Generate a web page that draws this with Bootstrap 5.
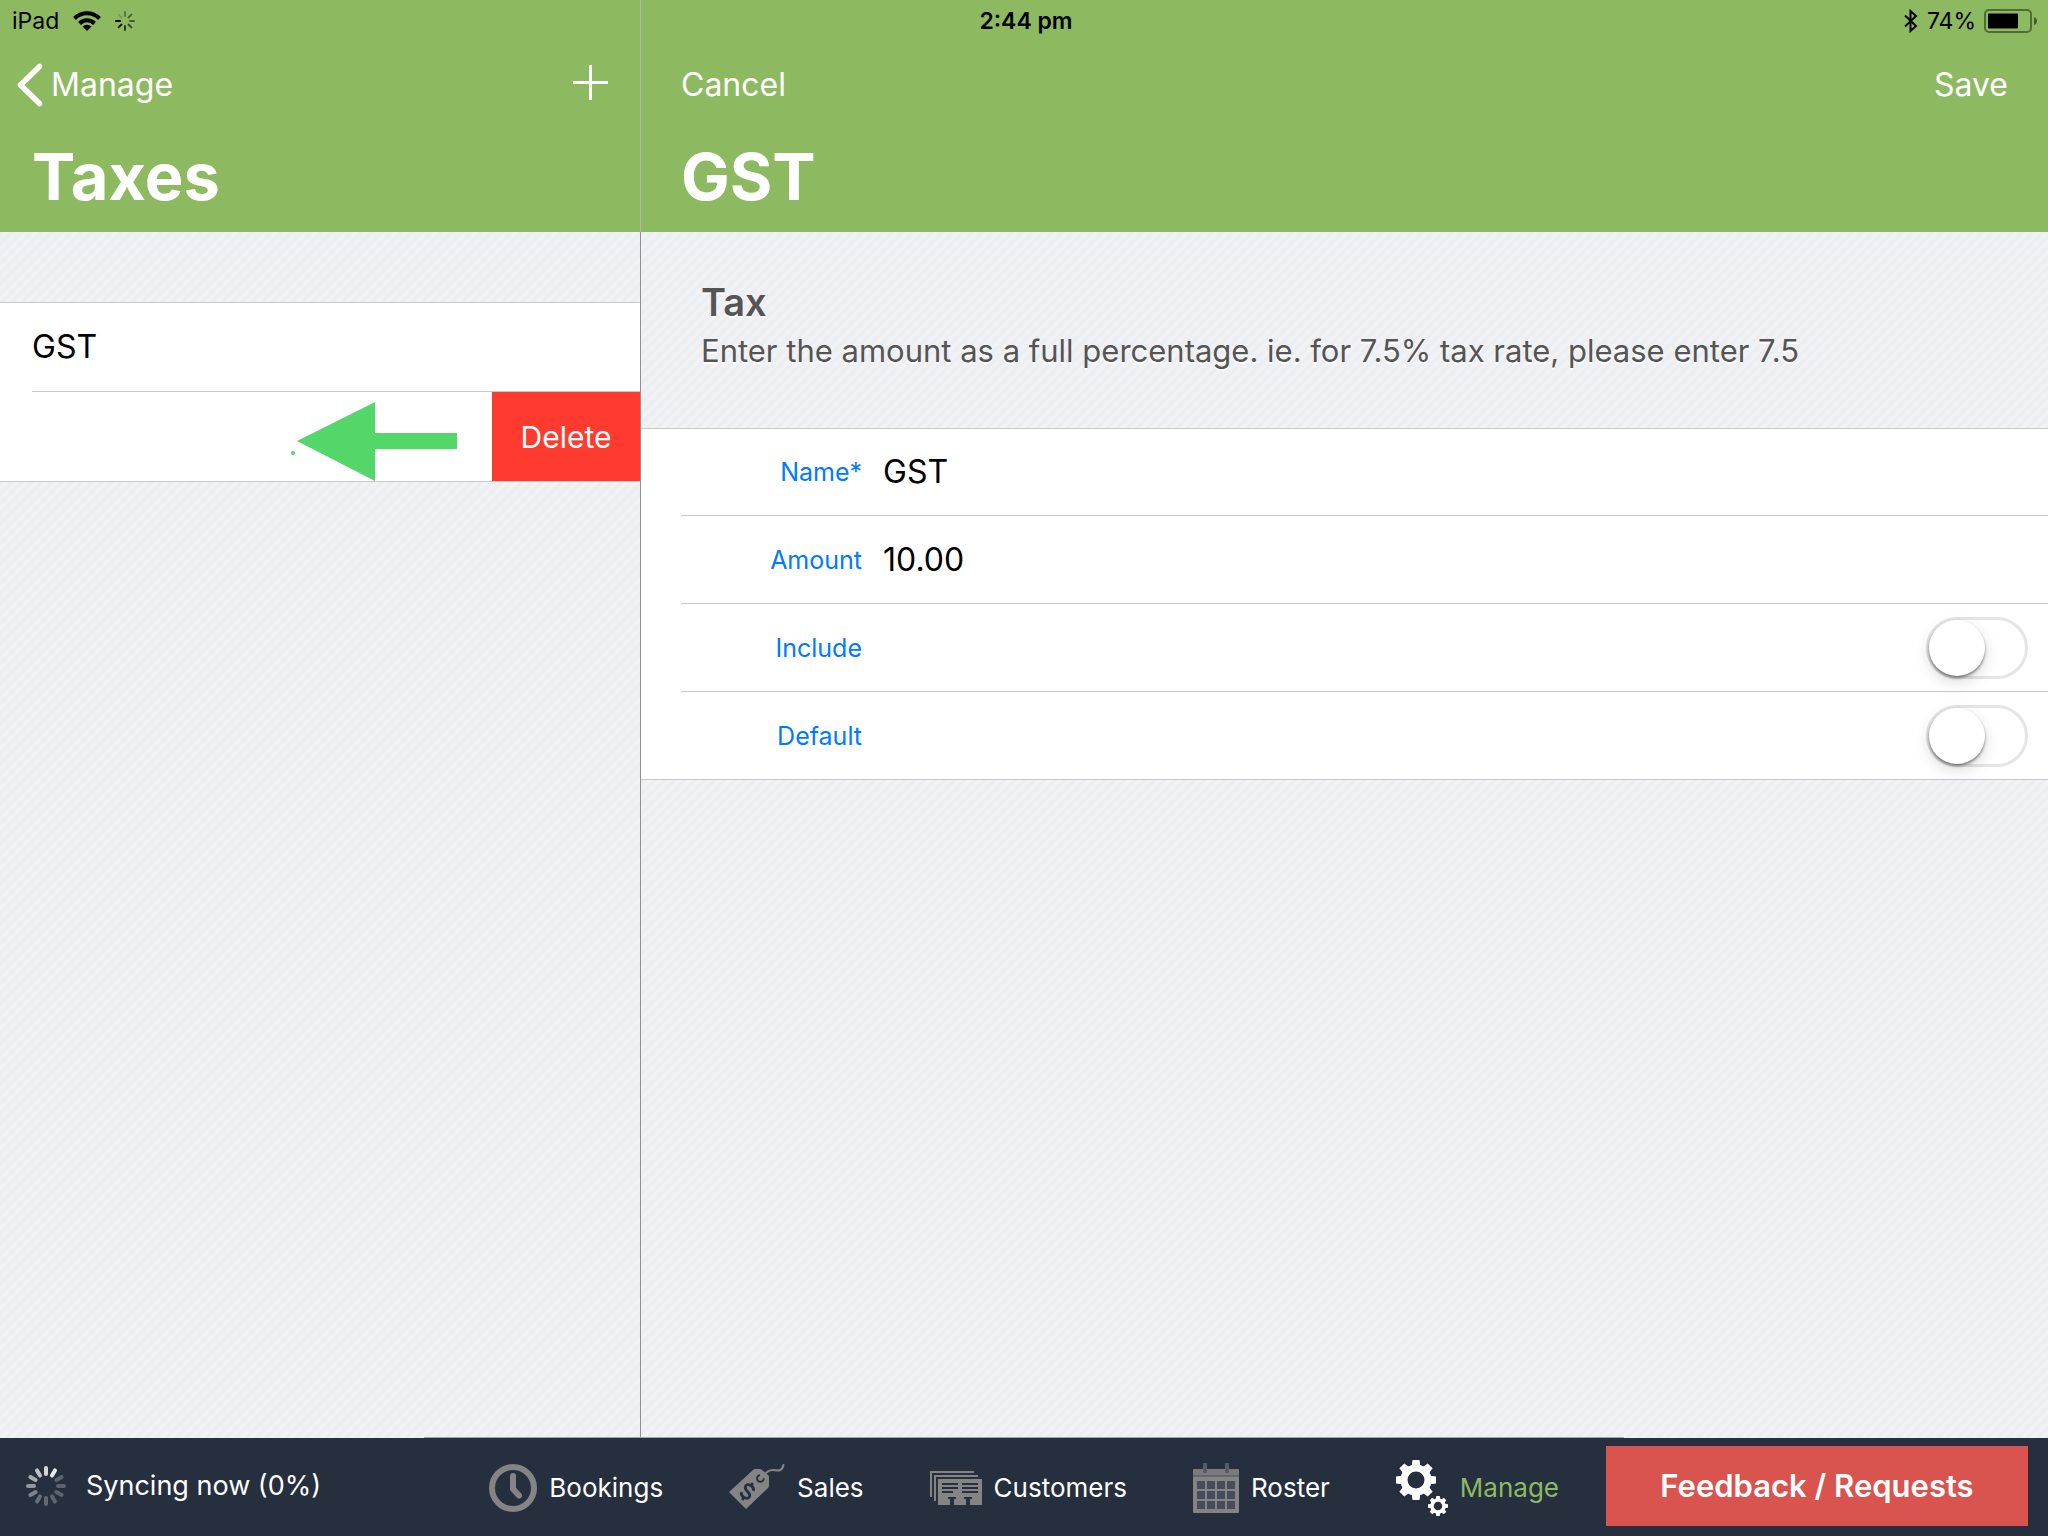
<!DOCTYPE html>
<html lang="en">
<head>
<meta charset="utf-8">
<meta name="viewport" content="width=device-width, initial-scale=1">
<title>Taxes – GST</title>
<link href="https://cdn.jsdelivr.net/npm/bootstrap@5.3.0/dist/css/bootstrap.min.css" rel="stylesheet">
<style>
  :root { --green: #8dba61; --line: #c8c7cc; --navy: #262f3e; }
  body { font-family: Inter, "Liberation Sans", sans-serif; color: #000; }
  svg { display: block; flex-shrink: 0; }
  .stripes { background: #eff0f4 linear-gradient(135deg, #edeef2 25%, #f1f2f6 25%, #f1f2f6 50%, #edeef2 50%, #edeef2 75%, #f1f2f6 75%) 0 0 / 10px 10px; }

  .status-bar { height: 42px; font-size: 23px; line-height: 42px; z-index: 5; }
  .status-side { flex: 1 1 0; }
  .status-left { padding-left: 12px; gap: 14px; }
  .status-right { padding-right: 10px; gap: 8px; }
  .status-time { font-weight: 600; padding-left: 2px; }

  .side-pane { width: 31.25%; }
  .pane-head { background: var(--green); padding-top: 40px; padding-bottom: 8px; }
  .pane-bar { height: 90px; font-size: 32px; }
  .pane-bar a, .pane-bar button { color: #fff; text-decoration: none; font-size: 32px; line-height: 40px; }
  .pane-title { font-size: 65px; line-height: 94px; font-weight: 700; color: #fff; }
  .side-pane .pane-title { padding-left: 32px; }
  .main-pane .pane-title, .main-pane .pane-bar { padding-left: 40px; padding-right: 40px; }
  .main-pane .pane-head { border-left: 1px solid #b4b4ba; }
  .main-pane .pane-body { border-left: 1px solid #8e8e93; }

  .tax-list { margin-top: 70px; background: #fff; border-top: 1px solid var(--line); border-bottom: 1px solid var(--line); }
  .tax-row { min-height: 89px; margin-left: 32px; font-size: 32px; }
  .tax-row.ruled { border-bottom: 1px solid var(--line); }
  .delete-btn { width: 148px; background: #ff3b30; color: #fff; font-size: 30px; border: 0; border-radius: 0; padding: 2px 0 0; }
  .delete-btn:hover { background: #e8352b; color: #fff; }
  .swipe-hint { margin-right: 34px; }

  .intro { height: 196px; padding: 46px 60px 0 60px; color: #555; text-shadow: 0 2px 0 #fff; }
  .intro h2 { font-size: 38px; line-height: 48px; font-weight: 600; margin: 0; }
  .intro p { font-size: 31px; line-height: 50px; margin: 0; }
  .field-list { background: #fff; border-top: 1px solid var(--line); border-bottom: 1px solid var(--line); }
  .field-row { height: 88px; margin-left: 40px; padding-right: 20px; border-bottom: 1px solid var(--line); gap: 21px; }
  .field-row:first-child, .field-row:last-child { height: 87px; }
  .field-row:last-child { border-bottom: 0; }
  .field-row label { width: 181px; padding-top: 2px; text-align: right; color: #007aff; font-size: 25px; }
  .field-row .form-control-plaintext { font-size: 32px; line-height: 40px; color: #000; flex: 1; outline: 0; padding: 0; }
  .form-check-input.ios-switch { appearance: none; width: 102px; height: 62px; margin: 0 0 0 auto; float: none; border: 3px solid #e5e5e5; border-radius: 31px; background: #fff; position: relative; }
  .ios-switch::before { content: ""; position: absolute; left: 0; top: 0; width: 56px; height: 56px; border-radius: 50%; background: #fff; box-shadow: 0 2px 3px rgba(0,0,0,.45), 0 6px 16px rgba(0,0,0,.15); }
  .ios-switch:checked { background: #4cd964; border-color: #4cd964; }
  .ios-switch:checked::before { left: 40px; }

  .tab-bar { height: 98px; background: var(--navy); color: #fff; padding: 0 20px 2px 26px; }
  .tab-line { height: 1px; background: #a2a3a8; width: 1200px; margin-top: -1px; z-index: 2; }
  .sync-state { font-size: 27px; gap: 20px; }
  .tabs { gap: 66px; margin-right: 47px; padding-top: 4px; }
  .tabs a { color: #fff; text-decoration: none; font-size: 26px; line-height: 36px; gap: 12px; }
  .tabs a.active { color: var(--green); }
  .feedback-btn { width: 422px; height: 80px; background: #d9534f; color: #fff; font-size: 31px; font-weight: 600; border: 0; border-radius: 0; padding: 0; }
  .feedback-btn:hover { background: #c9302c; color: #fff; }
</style>
</head>
<body>
<div class="d-flex flex-column vh-100 position-relative overflow-hidden">

  <div class="status-bar position-absolute top-0 start-0 w-100 d-flex align-items-center">
    <div class="status-side status-left d-flex align-items-center">
      <span>iPad</span>
      <svg width="28" height="20" viewBox="0 0 28 20" aria-label="Wi-Fi"><g fill="none" stroke="#000" stroke-width="4"><path d="M1.500 7.500a17.500 17.500 0 0 1 25 0"/><path d="M6.500 12.500a10.500 10.500 0 0 1 15 0"/></g><path d="M14 20l-4.500-4.500a6.400 6.400 0 0 1 9 0z"/></svg>
      <svg width="20" height="20" viewBox="-10 -10 20 20" aria-label="Network activity"><g stroke="#000" stroke-width="2" stroke-linecap="round"><path d="M0-9v4" opacity=".35"/><path d="M6.400-6.400L3.500-3.500" opacity=".45"/><path d="M9 0H5" opacity=".5"/><path d="M6.400 6.400L3.500 3.500" opacity=".6"/><path d="M0 9V5" opacity=".7"/><path d="M-6.400 6.400l2.900-2.900" opacity=".85"/><path d="M-9 0h4"/><path d="M-6.400-6.400l2.900 2.900" opacity=".15"/></g></svg>
    </div>
    <div class="status-time">2:44 pm</div>
    <div class="status-side status-right d-flex align-items-center justify-content-end">
      <svg width="16" height="24" viewBox="0 0 16 24" aria-label="Bluetooth"><path d="M2 6.500l11 10.500-5.500 5V2L13 7 2 17.500" fill="none" stroke="#000" stroke-width="2"/></svg>
      <span>74%</span>
      <svg width="54" height="24" viewBox="0 0 54 24" aria-label="Battery"><rect x="1" y="1" width="46" height="22" rx="4" fill="none" stroke="#000" stroke-opacity=".42" stroke-width="2"/><rect x="4" y="4.500" width="30" height="15" rx="1"/><path d="M50 8q3 1 3 4t-3 4z" opacity=".5"/></svg>
    </div>
  </div>

  <div class="d-flex flex-grow-1">
    <aside class="side-pane d-flex flex-column flex-shrink-0">
      <header class="pane-head">
        <div class="pane-bar d-flex align-items-center justify-content-between ps-3">
          <a href="#" class="d-flex align-items-center">
            <svg width="35" height="44" viewBox="0 0 35 44" aria-hidden="true"><path d="M23.500 3.500L4.500 22l19 18.500" fill="none" stroke="#fff" stroke-width="5.500" stroke-linecap="round" stroke-linejoin="round"/></svg>
            Manage
          </a>
          <button type="button" class="btn border-0 p-0 me-4" aria-label="Add tax">
            <svg class="me-2" width="35" height="40" viewBox="0 0 35 40"><path d="M0 17.500h35M17.500 0v35" stroke="#fff" stroke-width="3"/></svg>
          </button>
        </div>
        <h1 class="pane-title m-0">Taxes</h1>
      </header>
      <div class="stripes flex-grow-1 overflow-hidden">
        <div class="tax-list">
          <div class="tax-row ruled d-flex align-items-center">GST</div>
          <div class="tax-row d-flex align-items-center">
            <svg class="swipe-hint ms-auto align-self-end" width="168" height="80" viewBox="0 0 168 80" aria-label="Swipe left"><path d="M7 40L85 1v31h82v16H85v32z" fill="#53d769"/><circle cx="3" cy="52" r="2" fill="#53d769"/></svg>
            <button type="button" class="btn delete-btn align-self-stretch">Delete</button>
          </div>
        </div>
      </div>
    </aside>

    <main class="main-pane d-flex flex-column flex-grow-1">
      <header class="pane-head">
        <div class="pane-bar d-flex align-items-center justify-content-between">
          <button type="button" class="btn border-0 p-0">Cancel</button>
          <button type="button" class="btn border-0 p-0">Save</button>
        </div>
        <h1 class="pane-title m-0">GST</h1>
      </header>
      <div class="pane-body stripes flex-grow-1">
        <div class="intro">
          <h2>Tax</h2>
          <p>Enter the amount as a full percentage. ie. for 7.5% tax rate, please enter 7.5</p>
        </div>
        <form class="field-list">
          <div class="field-row d-flex align-items-center">
            <label for="tax-name">Name*</label>
            <input id="tax-name" type="text" class="form-control-plaintext" value="GST">
          </div>
          <div class="field-row d-flex align-items-center">
            <label for="tax-amount">Amount</label>
            <input id="tax-amount" type="text" inputmode="decimal" class="form-control-plaintext" value="10.00">
          </div>
          <div class="field-row d-flex align-items-center">
            <label for="tax-include">Include</label>
            <input id="tax-include" type="checkbox" role="switch" class="form-check-input ios-switch">
          </div>
          <div class="field-row d-flex align-items-center">
            <label for="tax-default">Default</label>
            <input id="tax-default" type="checkbox" role="switch" class="form-check-input ios-switch">
          </div>
        </form>
      </div>
    </main>
  </div>

  <div class="tab-line mx-auto position-relative"></div>
  <footer class="tab-bar d-flex align-items-center flex-shrink-0">
    <div class="sync-state d-flex align-items-center me-auto">
      <svg width="40" height="40" viewBox="-20 -20 40 40" aria-hidden="true"><g stroke="#fff" stroke-width="4" stroke-linecap="round"><path d="M0-18v6" opacity=".8"/><path d="M0-18v6" transform="rotate(30)" opacity=".9"/><path d="M0-18v6" transform="rotate(60)" opacity=".25"/><path d="M0-18v6" transform="rotate(90)" opacity=".25"/><path d="M0-18v6" transform="rotate(120)" opacity=".25"/><path d="M0-18v6" transform="rotate(150)" opacity=".25"/><path d="M0-18v6" transform="rotate(180)" opacity=".28"/><path d="M0-18v6" transform="rotate(210)" opacity=".3"/><path d="M0-18v6" transform="rotate(240)" opacity=".4"/><path d="M0-18v6" transform="rotate(270)" opacity=".5"/><path d="M0-18v6" transform="rotate(300)" opacity=".6"/><path d="M0-18v6" transform="rotate(330)" opacity=".7"/></g></svg>
      <span>Syncing now (0%)</span>
    </div>
    <nav class="tabs d-flex align-items-center">
      <a href="#" class="d-flex align-items-center">
        <svg width="48" height="48" viewBox="0 0 48 48" aria-hidden="true"><g fill="none" stroke="#848484" stroke-width="6"><circle cx="24" cy="24" r="21"/><path d="M24 12v13l6 6.500" stroke-linecap="round" stroke-linejoin="round"/></g></svg>
        Bookings
      </a>
      <a href="#" class="d-flex align-items-center">
        <svg width="56" height="50" viewBox="0 0 56 50" aria-hidden="true"><path d="M0 29L24 7q1-1 2-1h5q1 0 2 1l6 5q1 1 1 2v8q0 2-1 3L17 46z" fill="#848484"/><path d="M34.500 13.500C38 7 42 6.500 46 7.200c4 .6 7 .6 8.500-5.200" fill="none" stroke="#848484" stroke-width="2.200" stroke-linecap="round"/><path d="M31 12.200a3.300 3.300 0 1 0 3.700 3" fill="none" stroke="#262f3e" stroke-width="1.800"/><g transform="translate(18.500 28.500) rotate(32)" fill="none" stroke="#262f3e" stroke-width="2.800"><path d="M4.500-3.500C4-8-4.500-8-4.500-3.500S4.500-1 4.500 3.500-4 8-4.500 3.500"/><path d="M0-10v4M0 6v4"/></g></svg>
        Sales
      </a>
      <a href="#" class="d-flex align-items-center">
        <svg width="52" height="34" viewBox="0 0 52 34" aria-hidden="true" shape-rendering="crispEdges"><path d="M0 0h44v2H2v24H0zM4 4h44v2H6v24H4zM8 8h44v26H40v-6h2v-2h-8v2h2v6H24v-6h2v-2h-8v2h2v6H8z" fill="#848484"/><path d="M12 12h16v2H12zM12 16h16v2H12zM12 20h11v2H12zM32 12h16v2H32zM32 16h16v2H32zM32 20h16v2H32z" fill="#262f3e"/></svg>
        Customers
      </a>
      <a href="#" class="d-flex align-items-center">
        <svg width="46" height="50" viewBox="0 0 46 50" aria-hidden="true"><rect y="6" width="46" height="44" rx="1" fill="#848484"/><path d="M1 6h44q1 0 1 1v5H0V7q0-1 1-1z" fill="#797b7e"/><path d="M0 12h46v2H0z" fill="#64676c"/><path d="M10 0h4v10h-4zM32 0h4v10h-4z" fill="#535d67"/><path d="M4 18h8v8H4zM14 18h8v8h-8zM24 18h8v8h-8zM34 18h8v8h-8zM4 28h8v8H4zM14 28h8v8h-8zM24 28h8v8h-8zM34 28h8v8h-8zM4 38h8v8H4zM14 38h8v8h-8zM24 38h8v8h-8zM34 38h8v8h-8z" fill="#454c5a"/></svg>
        Roster
      </a>
      <a href="#" class="active d-flex align-items-center" aria-current="page">
        <svg width="52" height="56" viewBox="0 0 52 56" aria-hidden="true">
          <defs><g id="gear"><circle r="12" fill="none" stroke="#fff" stroke-width="7"/><path id="tooth" d="M-3.500-20h7l1 7h-9z" fill="#fff"/><use href="#tooth" transform="rotate(45)"/><use href="#tooth" transform="rotate(90)"/><use href="#tooth" transform="rotate(135)"/><use href="#tooth" transform="rotate(180)"/><use href="#tooth" transform="rotate(225)"/><use href="#tooth" transform="rotate(270)"/><use href="#tooth" transform="rotate(315)"/></g></defs>
          <use href="#gear" transform="translate(20 20)"/><use href="#gear" transform="translate(42 46) scale(.5)"/>
        </svg>
        Manage
      </a>
    </nav>
    <button type="button" class="btn feedback-btn">Feedback / Requests</button>
  </footer>
</div>
<script src="https://cdn.jsdelivr.net/npm/bootstrap@5.3.0/dist/js/bootstrap.bundle.min.js"></script>
</body>
</html>
